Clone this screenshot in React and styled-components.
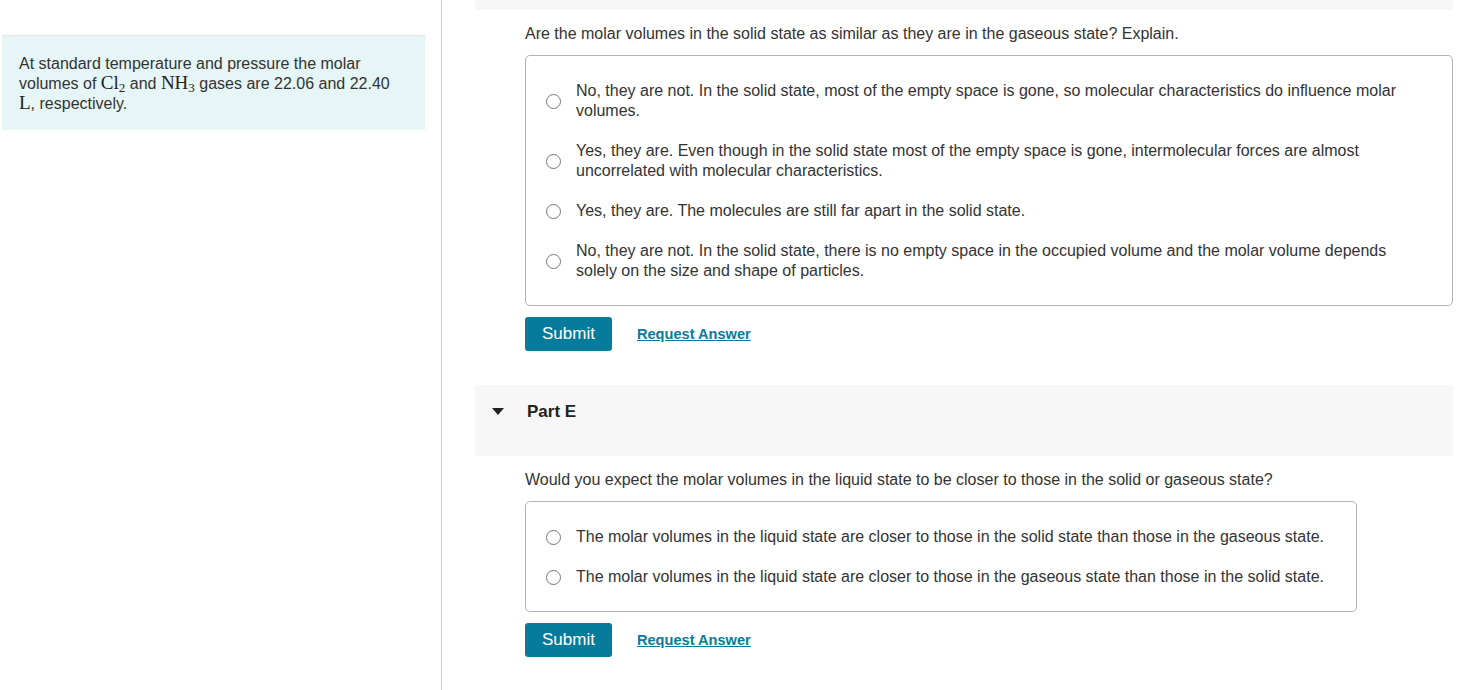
import React from "react";
import styled, { createGlobalStyle } from "styled-components";

const Global = createGlobalStyle`
  html, body { margin: 0; padding: 0; background: #fff; }
  body { font-family: "Liberation Sans", Arial, sans-serif; color: #333; font-size: 16px; }
`;

const Page = styled.div`
  display: grid;
  grid-template-columns: 442px 1fr;
  min-height: 690px;
`;

const LeftPane = styled.aside`
  border-right: 1px solid #c9d1dc;
  padding: 35px 16px 0 2px;
`;

const InfoBox = styled.div`
  background: #e6f5f6;
  border-top: 1px solid #dde3e8;
  padding: 18px 17px 16px 17px;
  line-height: 20px;
  font-size: 16px;
  color: #333;
`;

const Chem = styled.span`
  font-family: "Liberation Serif", "Times New Roman", serif;
  font-size: 19px;
  line-height: 14px;
  color: #222;
`;

const Sub = styled.span`
  font-size: 13px;
  position: relative;
  top: 3px;
  line-height: 0;
`;

const RightPane = styled.main`
  padding: 0 25px 0 33px;
`;

const TopBar = styled.div`
  height: 10px;
  background: #f7f7f7;
`;

const Section = styled.section`
  padding: 14px 0 0 50px;
`;

const Question = styled.p`
  margin: 0;
  line-height: 20px;
  font-size: 16px;
  color: #333;
`;

const OptionBox = styled.div`
  margin-top: 11px;
  border: 1px solid #b3b3b3;
  border-radius: 5px;
  padding: 25px 32px 24px 20px;
  display: flex;
  flex-direction: column;
  gap: 20px;
  width: ${(p) => (p.$fit ? "fit-content" : "auto")};
`;

const Option = styled.label`
  display: flex;
  align-items: center;
  gap: 15px;
  line-height: 20px;
  font-size: 16px;
  color: #333;
  cursor: pointer;
`;

const Radio = styled.span`
  flex: none;
  box-sizing: border-box;
  width: 15px;
  height: 15px;
  border: 1.5px solid #767676;
  border-radius: 50%;
  background: #fff;
`;

const Actions = styled.div`
  display: flex;
  align-items: center;
  gap: 25px;
  margin-top: 11px;
`;

const SubmitButton = styled.button`
  height: 34px;
  padding: 0 17px;
  background: #077b9b;
  color: #fff;
  border: none;
  border-radius: 3px;
  font-family: "Liberation Sans", Arial, sans-serif;
  font-size: 17px;
  cursor: pointer;
`;

const RequestLink = styled.a`
  color: #0a7a9d;
  font-weight: bold;
  font-size: 14.6px;
  text-decoration: underline;
  cursor: pointer;
`;

const PartHeader = styled.div`
  margin-top: 34px;
  height: 71px;
  box-sizing: border-box;
  background: #f7f7f7;
  padding: 18px 0 0 17px;
  display: flex;
  align-items: flex-start;
  gap: 23px;
`;

const Caret = styled.span`
  width: 0;
  height: 0;
  margin-top: 5px;
  border-left: 6.5px solid transparent;
  border-right: 6.5px solid transparent;
  border-top: 7px solid #222;
`;

const PartTitle = styled.span`
  font-weight: bold;
  font-size: 17px;
  line-height: 18px;
  color: #222;
`;

const q1 = [
  "No, they are not. In the solid state, most of the empty space is gone, so molecular characteristics do influence molar volumes.",
  "Yes, they are. Even though in the solid state most of the empty space is gone, intermolecular forces are almost uncorrelated with molecular characteristics.",
  "Yes, they are. The molecules are still far apart in the solid state.",
  "No, they are not. In the solid state, there is no empty space in the occupied volume and the molar volume depends solely on the size and shape of particles.",
];

const q2 = [
  "The molar volumes in the liquid state are closer to those in the solid state than those in the gaseous state.",
  "The molar volumes in the liquid state are closer to those in the gaseous state than those in the solid state.",
];

function Choices({ items, fit }) {
  return (
    <OptionBox $fit={fit}>
      {items.map((t) => (
        <Option key={t}>
          <Radio />
          <span>{t}</span>
        </Option>
      ))}
    </OptionBox>
  );
}

function Buttons() {
  return (
    <Actions>
      <SubmitButton>Submit</SubmitButton>
      <RequestLink>Request Answer</RequestLink>
    </Actions>
  );
}

export default function App() {
  return (
    <>
      <Global />
      <Page>
        <LeftPane>
          <InfoBox>
            At standard temperature and pressure the molar volumes of{" "}
            <Chem>
              Cl<Sub>2</Sub>
            </Chem>{" "}
            and{" "}
            <Chem>
              NH<Sub>3</Sub>
            </Chem>{" "}
            gases are 22.06 and 22.40 <Chem>L</Chem>, respectively.
          </InfoBox>
        </LeftPane>
        <RightPane>
          <TopBar />
          <Section>
            <Question>
              Are the molar volumes in the solid state as similar as they are in the gaseous state? Explain.
            </Question>
            <Choices items={q1} />
            <Buttons />
          </Section>
          <PartHeader>
            <Caret />
            <PartTitle>Part E</PartTitle>
          </PartHeader>
          <Section>
            <Question>
              Would you expect the molar volumes in the liquid state to be closer to those in the solid or gaseous state?
            </Question>
            <Choices items={q2} fit />
            <Buttons />
          </Section>
        </RightPane>
      </Page>
    </>
  );
}
